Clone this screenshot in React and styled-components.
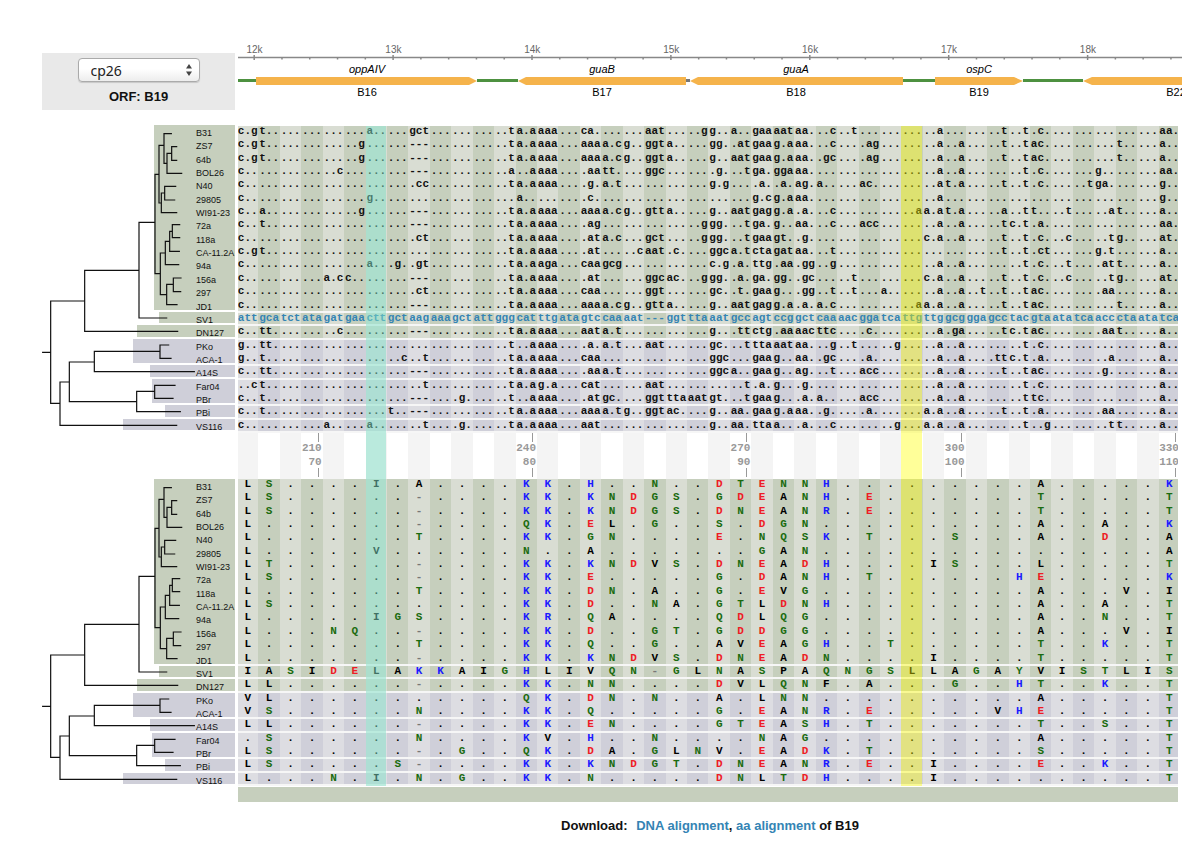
import React, { useState } from 'react'
import styled, { createGlobalStyle, css } from 'styled-components'

const GlobalStyle = createGlobalStyle`
    body {
        margin: 0;
        background: #fff;
        color: #111;
        font-family: "Liberation Sans", Arial, sans-serif;
    }
`

const COLUMNS = 44

// dna holds only the codons that differ, as column:codon
const strains = [
    { name: 'B31', dna: '0:c.g 1:t.. 6:a.. 8:gct 12:..t 13:a.a 14:aaa 16:ca. 19:aat 21:..g 22:g.. 23:a.. 24:gaa 25:aat 26:aa. 27:..c 28:..t 32:..a 35:..t 36:..t 37:.c. 43:aa.', aa: 'LS....I.A....KK.H..N..DTENNH.........A.....K' },
    { name: 'ZS7', dna: '0:c.g 1:t.. 5:..g 8:--- 12:..t 13:a.a 14:aaa 16:aaa 17:a.c 18:g.. 19:ggt 20:a.. 22:gg. 23:.at 24:gaa 25:g.a 26:aa. 27:..c 29:.ag 32:..a 33:..a 35:..t 36:..t 37:ac. 41:t.. 43:a..', aa: 'LS......-....KK.KNDGS.GDEANH.E.......T.....T' },
    { name: '64b', dna: '0:c.g 1:t.. 5:..g 8:--- 12:..t 13:a.a 14:aaa 16:aaa 17:a.c 18:g.. 19:ggt 20:a.. 22:g.. 23:aat 24:gaa 25:g.a 26:aa. 27:.gc 29:.ag 32:..a 33:..a 35:..t 36:..t 37:ac. 41:t.. 43:a..', aa: 'LS......-....KK.KNDGS.DNEANR.E.......T.....T' },
    { name: 'BOL26', dna: '0:c.. 4:..c 8:--- 12:..a 13:..a 14:aaa 16:.aa 17:tt. 19:ggc 22:.g. 23:..t 24:ga. 25:gga 26:aa. 32:..a 33:..a 36:..t 37:.c. 40:g.. 43:aa.', aa: 'L.......-....QK.EL.G..S.DGN..........A..A..K' },
    { name: 'N40', dna: '0:c.. 8:.cc 12:..t 13:a.a 14:aaa 16:.g. 17:a.t 22:g.g 24:.a. 25:.a. 26:ag. 27:a.. 29:ac. 32:..a 33:t.a 35:..t 36:..t 37:.c. 39:..t 40:ga. 43:g..', aa: 'L.......T....KK.GN....E.NQSK.T...S...A..D..A' },
    { name: '29805', dna: '0:c.. 6:g.. 13:a.. 16:.c. 24:g.c 25:g.a 26:aa. 32:..a 43:g..', aa: 'L.....V......N..A.......GAN................A' },
    { name: 'WI91-23', dna: '0:c.. 1:a.. 5:..g 8:--- 12:..t 13:a.a 14:aaa 16:aaa 17:a.c 18:g.. 19:gtt 20:a.. 22:g.. 23:aat 24:gag 25:g.a 26:.a. 27:..c 31:..a 32:a.a 33:t.a 35:..a 36:..t 37:t.. 38:..t 40:..a 41:t.. 43:a..', aa: 'LT......-....KK.KNDVS.DNEADH....IS...L.....T' },
    { name: '72a', dna: '0:c.. 1:t.. 8:--- 12:..t 13:a.a 14:aaa 16:.ag 21:..g 22:gg. 23:..t 24:ga. 25:g.. 26:aa. 27:..c 29:acc 32:..a 33:..a 35:..t 36:c.t 37:.a. 43:aa.', aa: 'LS......-....KK.E.....G.DANH.T......HE.....K' },
    { name: '118a', dna: '0:c.. 8:.ct 12:..t 13:a.a 14:aaa 16:.at 17:a.c 19:gct 21:..g 22:gg. 23:..t 24:gaa 25:gt. 26:.g. 32:c.a 33:..a 35:..t 36:..t 37:.c. 38:..c 40:..t 41:g.. 43:at.', aa: 'L.......T....KK.DN.A..G.EVG..........A...V.I' },
    { name: 'CA-11.2A', dna: '0:c.g 1:t.. 12:..t 13:a.a 14:aaa 16:.at 18:..c 19:aat 20:.c. 22:ggc 23:a.t 24:cta 25:gat 26:aa. 27:..t 35:..t 36:..t 37:.ct 40:g.t 43:a..', aa: 'LS...........KK.D..NA.GTLDNH.........A..A..T' },
    { name: '94a', dna: '0:c.. 6:a.. 7:.g. 8:.gt 12:..t 13:a.a 14:aga 16:caa 17:gcg 22:c.g 23:.a. 24:ttg 25:.aa 26:.gg 27:..g 32:..a 33:..a 36:..t 37:.c. 38:..t 40:.at 41:t.. 43:a..', aa: 'L.....IGS....KR.QA....QDLQG..........A..N..T' },
    { name: '156a', dna: '0:c.. 4:a.c 5:c.. 8:--- 12:..t 13:a.a 14:aaa 16:.at 19:ggc 20:ac. 21:..g 22:gg. 23:.a. 24:ga. 25:gg. 26:.gc 28:..t 32:c.a 33:..a 35:..t 36:..t 37:.c. 38:..c 40:..t 41:g.. 43:at.', aa: 'L...NQ..-....KK.D..GT.GDDGG..........A...V.I' },
    { name: '297', dna: '0:c.. 8:.ct 12:..t 13:a.a 14:aaa 16:caa 19:ggt 22:gc. 23:.t. 24:gaa 25:g.. 26:.gg 27:..t 28:..t 30:a.. 32:..a 33:..a 34:..t 35:..t 36:..t 37:ac. 40:.aa 43:a..', aa: 'L.......T....KK.Q..G..AVEAGH..T......T..K..T' },
    { name: 'JD1', dna: '0:c.. 8:--- 12:..t 13:a.a 14:aaa 16:aaa 17:a.c 18:g.. 19:gtt 20:a.. 22:g.. 23:aat 24:gag 25:g.a 26:.a. 27:a.c 31:..a 32:a.a 33:..a 35:..t 36:..t 37:ac. 41:t.. 43:a..', aa: 'L.......-....KK.KNDVS.DNEADN....I....T.....T' },
    { name: 'SV1', reference: 'att gca tct ata gat gaa ctt gct aag aaa gct att ggg cat ttg ata gtc caa aat --- ggt tta aat gcc agt ccg gct caa aac gga tca ttg ttg gcg gga gcc tac gta ata tca acc cta ata tca', aa: 'IASIDELAKKAIGHLIVQN-GLNASPAQNGSLLAGAYVISTLIS' },
    { name: 'DN127', dna: '0:c.. 1:tt. 4:..c 8:--- 12:..t 13:a.a 14:aaa 16:aat 17:a.t 22:g.. 23:.tt 24:ctg 25:.aa 26:aac 27:ttc 29:.c. 32:..a 33:.ga 35:..t 36:c.t 37:ac. 40:.aa 41:t.. 43:a..', aa: 'LL......-....KK.NN....DVLQNF.A...G..HT..K..T' },
    { name: 'PKo', dna: '0:g.. 1:tt. 12:..t 13:..a 14:aaa 16:.a. 17:a.t 19:aat 22:gc. 23:..t 24:tta 25:aat 26:aa. 27:..g 28:..t 30:..g 32:..a 33:..a 36:..t 37:.c. 43:a..', aa: 'VL...........QK.DN.N..A.LNN..........A.....T' },
    { name: 'ACA-1', dna: '0:g.. 1:t.. 7:..c 8:..t 12:..t 13:a.a 14:aaa 16:caa 22:ggc 24:gaa 25:g.. 26:aa. 27:.gc 29:.a. 32:..a 33:..a 35:.tt 36:c.t 37:.a. 40:..a 43:a..', aa: 'VS......N....KK.Q.....G.EANR.E.....VHE.....T' },
    { name: 'A14S', dna: '0:c.. 1:tt. 8:--- 12:..t 13:a.a 14:aaa 16:.aa 17:a.t 22:ggc 23:a.. 24:gaa 25:g.. 26:ag. 27:..t 29:acc 32:..a 33:..a 35:..t 36:..t 37:ac. 40:.g. 43:a..', aa: 'LL......-....KK.EN....GTEASH.T.......T..S..T' },
    { name: 'Far04', dna: '0:..c 1:t.. 8:..t 12:..t 13:a.a 14:g.a 16:cat 19:aat 23:..t 24:.a. 25:g.. 26:.g. 32:..a 33:..a 36:..t 37:.c. 43:a..', aa: '.S......N....KV.H..N....NAG..........A.....T' },
    { name: 'PBr', dna: '0:c.. 1:t.. 8:--- 10:.g. 12:..t 13:..a 14:aaa 16:.at 17:gc. 19:ggt 20:tta 21:aat 22:gt. 23:..t 24:gaa 25:g.. 26:.a. 27:a.. 29:acc 32:..a 33:..a 36:..t 37:tc. 43:a..', aa: 'LS......-.G..QK.DA.GLNV.EADK.T.......S.....T' },
    { name: 'PBi', dna: '0:c.. 1:t.. 7:t.. 8:--- 12:..t 13:a.a 14:aaa 16:aaa 17:a.t 18:g.. 19:ggt 20:ac. 22:g.. 23:aa. 24:gaa 25:g.a 26:aa. 27:.g. 29:.a. 32:a.a 33:..a 35:..t 36:..t 37:.a. 40:.aa 43:a..', aa: 'LS.....S-....KK.KNDGT.DNEANR.E..I....E..K..T' },
    { name: 'VS116', dna: '0:c.. 4:a.. 6:a.. 8:..t 10:.g. 12:..t 13:a.a 14:aaa 16:aat 22:g.. 23:aa. 24:tta 25:a.. 26:.a. 27:..c 30:..g 32:a.a 33:..a 36:..t 37:..g 40:..t 41:t.. 43:a..', aa: 'L...N.I.N.G..KK.N.....DNLTDH....I..........T' }
]

const clades = [
    { start: 0, size: 14, left: 112, tint: 'green' },
    { start: 14, size: 1, left: 117, tint: 'green' },
    { start: 15, size: 1, left: 95, tint: 'green' },
    { start: 16, size: 2, left: 91, tint: 'purple' },
    { start: 18, size: 1, left: 108, tint: 'purple' },
    { start: 19, size: 2, left: 110, tint: 'purple' },
    { start: 21, size: 1, left: 123, tint: 'purple' },
    { start: 22, size: 1, left: 81, tint: 'purple' }
]

const tints = {
    green: { dark: '#c6cfbd', light: '#d9ddd3' },
    purple: { dark: '#cfcfd9', light: '#dddde2' }
}

const positions = { 3: ['210', '70'], 13: ['240', '80'], 23: ['270', '90'], 33: ['300', '100'], 43: ['330', '110'] }

const codonsOf = strain => {
    if (strain.reference) return strain.reference.split(' ')
    const codons = Array(COLUMNS).fill('...')
    strain.dna.split(' ').forEach(part => {
        const [ column, codon ] = part.split(':')
        codons[column] = codon
    })
    return codons
}

const residueColor = letter => {
    if ('KRH'.includes(letter)) return '#1a1aff'
    if ('DE'.includes(letter)) return '#ee1c25'
    if ('STNQGY'.includes(letter)) return '#1a6b0f'
    if (letter === '-') return '#777'
    return '#000'
}

const columnGrid = css`
    display: grid;
    grid-template-columns: repeat(${COLUMNS}, minmax(0, 1fr));
`

const Page = styled.main`
    padding: 40px 19px 12px 42px;
`

const Split = styled.div`
    display: grid;
    grid-template-columns: 193px minmax(0, 1fr);
    column-gap: 3px;
`

const Alignments = styled(Split)`
    margin-top: 15px;
`

const Picker = styled.div`
    margin-top: 13px;
    padding-top: 5px;
    background: #e9e9e9;
    text-align: center;
`

const SelectWrap = styled.label`
    position: relative;
    display: inline-block;
    width: 122px;
    height: 24px;
    svg {
        position: absolute;
        right: 7px;
        top: 6px;
        pointer-events: none;
    }
`

const Select = styled.select`
    appearance: none;
    width: 100%;
    height: 24px;
    padding: 0 24px 0 12px;
    border: 1px solid #aaa;
    border-radius: 4px;
    background: linear-gradient(#fff, #fff 45%, #ededed);
    box-shadow: 0 1px 1px rgba(0, 0, 0, .15);
    color: #222;
    font: 14px "Noto Sans", sans-serif;
`

const OrfName = styled.div`
    margin-top: 7px;
    font-size: 13px;
    font-weight: bold;
    line-height: 16px;
`

const MapSvg = styled.svg`
    display: block;
    width: 100%;
    font-family: "Liberation Sans", Arial, sans-serif;
    font-size: 11px;
    text-anchor: middle;
    .scale {
        fill: #666;
        font-size: 10px;
    }
    .gene {
        font-style: italic;
    }
`

const TreeColumn = styled.div`
    display: flex;
    flex-direction: column;
    gap: 47px;
`

const TreePanel = styled.div`
    position: relative;
    display: grid;
    grid-template-columns: 100%;
    grid-template-rows: repeat(${strains.length}, minmax(0, 1fr));
    height: 307px;
    svg {
        position: absolute;
        inset: 0;
    }
`

const Clade = styled.div`
    grid-area: ${props => props.$start + 1} / 1 / span ${props => props.$size} / 2;
    margin: 0 0 2px ${props => props.$left}px;
    background: ${props => tints[props.$tint].dark};
`

const StrainName = styled.div`
    grid-area: ${props => props.$row + 1} / 1;
    padding: 3px 0 0 154px;
    font-size: 9px;
    line-height: 11px;
    white-space: nowrap;
`

const SequenceColumn = styled.div`
    padding: 1px 4px 0 0;
`

const Viewport = styled.div`
    position: relative;
    overflow: hidden;
`

// the first and last columns run a little past the edge of the viewport
const Track = styled.div`
    position: relative;
    margin: 0 -2px 0 -1px;
`

const Sequences = styled.table`
    display: grid;
    grid-template-rows: 307px;
    font-family: "Liberation Mono", "Courier New", monospace;
    font-size: 11px;
    font-weight: bold;
    line-height: 11px;
    tbody {
        display: grid;
        grid-template-rows: repeat(${strains.length}, minmax(0, 1fr));
    }
`

const SequenceRow = styled.tr`
    ${columnGrid}
    color: ${props => props.$reference ? '#3484b4' : '#111'};
    border-bottom: ${props => props.$last ? '2px solid #f6f6f6' : 'none'};
    td {
        padding: 0;
        background: ${props => tints[props.$tint].light};
        text-align: center;
        white-space: nowrap;
    }
    td:nth-child(even) {
        background: ${props => tints[props.$tint].dark};
    }
`

const Residue = styled.td`
    color: ${props => residueColor(props.$letter)};
`

const Scale = styled.div`
    ${columnGrid}
    height: 46px;
    color: #999;
    font: bold 11px/12px "Liberation Mono", "Courier New", monospace;
`

const ScaleCell = styled.div`
    display: flex;
    flex-direction: column;
    align-items: flex-end;
    padding-right: 1px;
    &:nth-child(odd) {
        background: #f4f4f4;
    }
    span + span {
        margin-top: 2px;
    }
`

const Tick = styled.i`
    width: 1px;
    height: 9px;
    margin-right: 3px;
    background: #999;
`

const Highlights = styled.div`
    ${columnGrid}
    position: absolute;
    inset: 0;
    pointer-events: none;
`

const Highlight = styled.div`
    grid-area: 1 / ${props => props.$column + 1};
    margin-right: 1px;
    background: ${props => props.$color};
`

const EndBar = styled.div`
    height: 15px;
    margin-top: 1px;
    background: #c6cfbd;
`

const Download = styled.p`
    margin: 16px 0 0;
    font-size: 13px;
    font-weight: bold;
    line-height: 16px;
    text-align: center;
    a {
        color: #3484b4;
        text-decoration: none;
    }
    a:first-of-type {
        margin-left: 5px;
    }
`

const branches = [
    'M38 697H62M62 543V850M62 543H164M164 451V634M164 634H443M164 451H327M327 307V594M327 594H410M327 307H375M375 163V461',
    'M375 163H387M387 76V249M387 76H402M402 41V130M402 41H424M402 130H411M411 100V160M411 160H455M411 100H425M425 80V121M425 80H440M425 121H440',
    'M387 249H394M394 219V278M394 278H440M394 219H404M404 199V240M404 199H437M404 240H434',
    'M375 461H391M391 399V524M391 399H406M406 364V434M406 434H446M406 364H419M419 334V394M419 394H448M419 334H427M427 314V353M427 314H449M427 353H449',
    'M391 524H410M410 493V554M410 554H441M410 493H430M430 474V515M430 474H453M430 515H452',
    'M62 850H90M90 786V916M90 916H440M90 786H118M118 726V845M118 726H193M193 694V755M193 694H390M390 675V715M390 675H416M390 715H423M193 755H493',
    'M118 845H320M320 814V875M320 875H451M320 814H374M374 796V835M374 796H435M374 835H429'
]

const Tree = () => (
    <TreePanel>
        {clades.map(({ start, size, left, tint }) => (
            <Clade key={start} $start={start} $size={size} $left={left} $tint={tint} />
        ))}
        {strains.map(({ name }, i) => <StrainName key={name} $row={i}>{name}</StrainName>)}
        <svg width="193" height="307" viewBox="36 15 579 921" aria-hidden="true">
            <path d={branches.join('')} fill="none" stroke="#111" strokeWidth="3.6" strokeLinecap="square" />
        </svg>
    </TreePanel>
)

const SequenceTable = ({ label, cells }) => (
    <Sequences aria-label={label}>
        <tbody>
            {strains.map((strain, i) => {
                const clade = clades.find(({ start, size }) => i >= start && i < start + size)
                return (
                    <SequenceRow
                        key={strain.name}
                        $tint={clade.tint}
                        $last={i === clade.start + clade.size - 1}
                        $reference={Boolean(strain.reference)}
                    >
                        {cells(strain)}
                    </SequenceRow>
                )
            })}
        </tbody>
    </Sequences>
)

const genes = [
    { gene: 'oppAIV', orf: 'B16', x: 129, points: '18,77 231,77 239,81 231,85 18,85' },
    { gene: 'guaB', orf: 'B17', x: 364, points: '280,81 288,77 448,77 448,85 288,85' },
    { gene: 'guaA', orf: 'B18', x: 558, points: '452,81 460,77 665,77 665,85 460,85' },
    { gene: 'ospC', orf: 'B19', x: 741, points: '697,77 776,77 785,81 776,85 697,85' },
    { gene: '', orf: 'B22', x: 938, points: '845,81 854,77 944,77 944,85 854,85' }
]

const spacers = [[0, 18], [239, 280], [665, 697], [785, 845]]

const GenomeMap = () => (
    <MapSvg viewBox="0 40 944 70" role="img" aria-label="Genome map">
        <path d="M0 57.5H944" stroke="#888" strokeWidth="1.5" />
        {Array.from({ length: 34 }, (_, i) => {
            const x = 16.2 + i * 27.78
            const major = i % 5 === 0
            return <path key={i} d={`M${x} ${major ? 55 : 58}V${major ? 60 : 59.5}`} stroke="#888" strokeWidth="1.5" />
        })}
        {[12, 13, 14, 15, 16, 17, 18].map((k, i) => (
            <text key={k} className="scale" x={16.5 + i * 138.9} y="53">{k}k</text>
        ))}
        {spacers.map(([ from, to ]) => (
            <rect key={from} x={from} y="79" width={to - from} height="3" fill="#4d9140" />
        ))}
        <rect x="448" y="79" width="4" height="3" fill="#777" />
        {genes.map(({ gene, orf, x, points }) => (
            <g key={orf}>
                <polygon points={points} fill="#f5b34b" />
                <text className="gene" x={x} y="73">{gene}</text>
                <text x={x} y="96">{orf}</text>
            </g>
        ))}
    </MapSvg>
)

const App = () => {
    const [ replicon, setReplicon ] = useState('cp26')

    return (
        <>
            <GlobalStyle />
            <Page>
                <Split>
                    <Picker>
                        <SelectWrap>
                            <Select aria-label="Replicon" value={replicon} onChange={e => setReplicon(e.target.value)}>
                                <option value="cp26">cp26</option>
                            </Select>
                            <svg width="8" height="12" viewBox="0 0 8 12" aria-hidden="true">
                                <path d="M4 0L7 4.5H1ZM4 12L7 7.5H1Z" fill="#444" />
                            </svg>
                        </SelectWrap>
                        <OrfName>ORF: B19</OrfName>
                    </Picker>
                    <GenomeMap />
                </Split>
                <Alignments>
                    <TreeColumn>
                        <Tree />
                        <Tree />
                    </TreeColumn>
                    <SequenceColumn>
                        <Viewport>
                            <Track>
                                <SequenceTable
                                    label="DNA alignment"
                                    cells={strain => codonsOf(strain).map((codon, i) => <td key={i}>{codon}</td>)}
                                />
                                <Scale>
                                    {Array.from({ length: COLUMNS }, (_, i) => (
                                        <ScaleCell key={i}>
                                            {positions[i] && (
                                                <>
                                                    <Tick />
                                                    <span>{positions[i][0]}</span>
                                                    <span>{positions[i][1]}</span>
                                                    <Tick />
                                                </>
                                            )}
                                        </ScaleCell>
                                    ))}
                                </Scale>
                                <SequenceTable
                                    label="Amino acid alignment"
                                    cells={strain => strain.aa.split('').map((letter, i) => (
                                        <Residue key={i} $letter={letter}>{letter}</Residue>
                                    ))}
                                />
                                <Highlights>
                                    <Highlight $column={6} $color="rgba(127, 223, 197, .5)" />
                                    <Highlight $column={31} $color="rgba(255, 255, 0, .4)" />
                                </Highlights>
                            </Track>
                        </Viewport>
                        <EndBar />
                    </SequenceColumn>
                </Alignments>
                <Split>
                    <span />
                    <Download>
                        Download: <a href="#dna">DNA alignment</a>, <a href="#aa">aa alignment</a> of B19
                    </Download>
                </Split>
            </Page>
        </>
    )
}

export default App
